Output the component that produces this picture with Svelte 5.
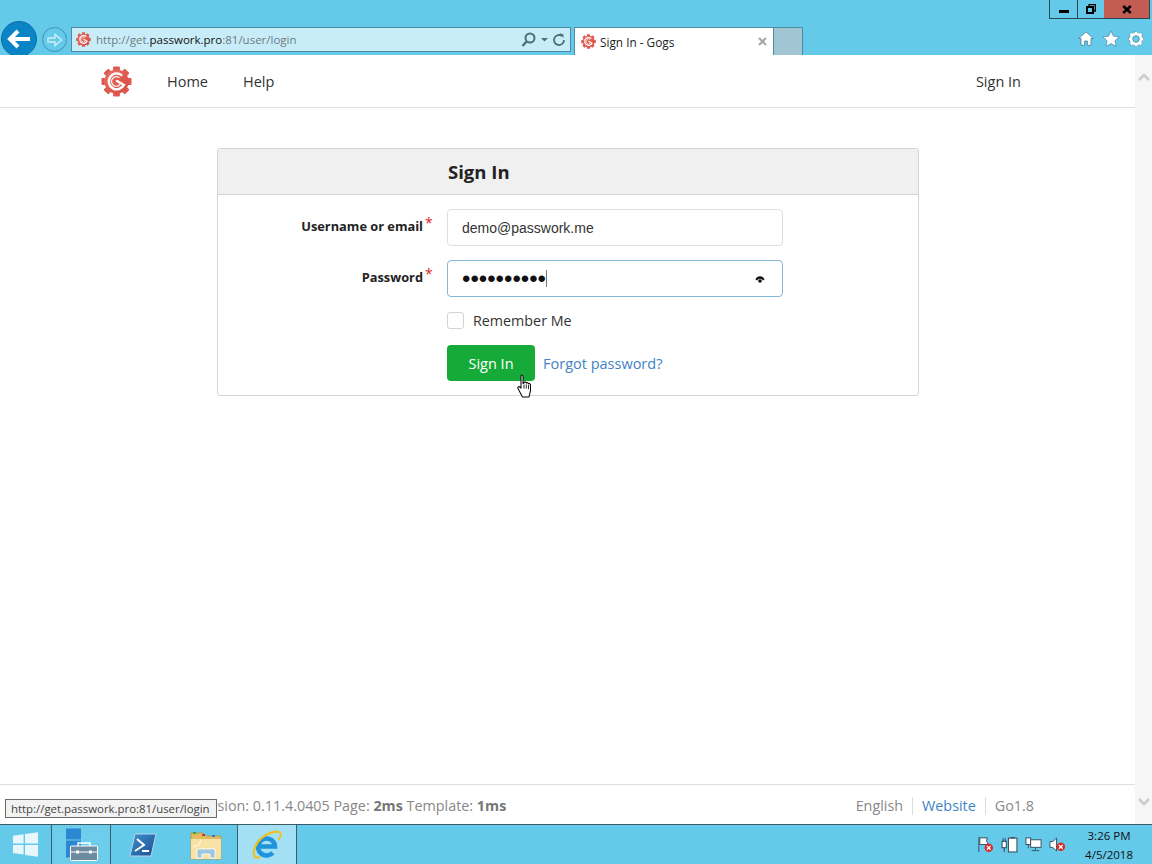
<script>
  const teeth = [0, 45, 90, 135, 180, 225, 270, 315];
  const taskItems = ['start', 'server', 'ps', 'folder', 'ie'];
</script>

{#snippet gear(size)}
  <svg class="gear" width={size} height={size} viewBox="0 0 32 32">
    <defs>
      <linearGradient id="gearFill" x1="0" y1="0" x2="1" y2="1">
        <stop offset="0" stop-color="#e8736a" />
        <stop offset="1" stop-color="#d9473d" />
      </linearGradient>
    </defs>
    {#each teeth as t}
      <rect x="12.5" y="0.5" width="7" height="8" rx="1" fill="#de5a50" transform="rotate({t} 16 16)" />
    {/each}
    <circle cx="16" cy="16" r="12.5" fill="url(#gearFill)" />
    <path d="M21 9.2 A8.2 8.2 0 1 0 23.6 19.5 L16.5 15.5" fill="none" stroke="#fff" stroke-width="2.6" stroke-linecap="round" />
    <path d="M19 12 A5 5 0 1 0 19.8 19" fill="none" stroke="#fff" stroke-width="1.2" />
  </svg>
{/snippet}

<div class="screen">
  <header class="chrome">
    <div class="winrow">
      <div class="winbtns">
        <div class="wb min"><span></span></div>
        <div class="wb restore">
          <svg width="10" height="10" viewBox="0 0 10 10"><path d="M3 2V0.700h6.300V7H8" fill="none" stroke="#000" stroke-width="1.300" /><rect x="1" y="3" width="6" height="6" fill="none" stroke="#000" stroke-width="2" /></svg>
        </div>
        <div class="wb close">
          <svg width="10" height="9" viewBox="0 0 10 9"><path d="M1.200 1 L8.800 8 M8.800 1 L1.200 8" stroke="#000" stroke-width="2.400" /></svg>
        </div>
      </div>
    </div>
    <div class="toolrow">
      <div class="back">
        <svg width="26" height="22" viewBox="0 0 26 22"><path d="M24 11H5M12 3l-8 8 8 8" fill="none" stroke="#fff" stroke-width="4" /></svg>
      </div>
      <div class="forward">
        <svg width="16" height="14" viewBox="0 0 16 14"><path d="M1 5h7V1.500L14.500 7 8 12.500V9H1z" fill="none" stroke="#d2eef8" stroke-width="1.300" /></svg>
      </div>
      <div class="address">
        {@render gear(15)}
        <span class="url">http://get.<b>passwork.pro</b>:81/user/login</span>
        <svg class="addr-tools" width="46" height="18" viewBox="0 0 46 18">
          <circle cx="9" cy="7" r="4.500" fill="none" stroke="#4d6f7c" stroke-width="2" />
          <path d="M5.500 10.500L1.500 15" stroke="#4d6f7c" stroke-width="2.400" />
          <path d="M20 7h7l-3.500 3.500z" fill="#4d6f7c" />
          <path d="M43 9a5 5 0 1 1-2-4" fill="none" stroke="#4d6f7c" stroke-width="1.800" />
          <path d="M38.500 2l4 1.500v3.500z" fill="#4d6f7c" />
        </svg>
      </div>
      <div class="tab">
        {@render gear(15)}
        <span>Sign In - Gogs</span>
        <svg class="tab-x" width="9" height="9" viewBox="0 0 9 9"><path d="M1 1l7 7M8 1l-7 7" stroke="#a5a5a5" stroke-width="2" /></svg>
      </div>
      <div class="newtab"></div>
      <div class="tool-icons">
        <svg width="16" height="15" viewBox="0 0 16 15"><path d="M8 0.800L0.700 7.500h2.300V14.300h3.600v-4.300h2.800v4.300H13V7.500h2.300z" fill="#fff" stroke="#3f7f9c" stroke-width="0.800" /></svg>
        <svg width="18" height="17" viewBox="0 0 17 16"><path d="M8.500 0.800l2.300 5 5.400.6-4 3.700 1.100 5.300-4.800-2.700-4.800 2.700 1.100-5.300-4-3.700 5.400-.6z" fill="#fff" stroke="#3f7f9c" stroke-width="0.600" /></svg>
        <svg width="16" height="16" viewBox="0 0 16 16">
          {#each teeth as t}
            <rect x="6.300" y="0.300" width="3.400" height="4" fill="#fff" stroke="#3f7f9c" stroke-width="0.500" transform="rotate({t} 8 8)" />
          {/each}
          <circle cx="8" cy="8" r="4.800" fill="none" stroke="#fff" stroke-width="2.800" />
          <circle cx="8" cy="8" r="3.300" fill="none" stroke="#3f7f9c" stroke-width="0.600" />
        </svg>
      </div>
    </div>
  </header>

  <div class="viewport">
    <div class="page">
      <nav class="nav">
        {@render gear(31)}
        <a class="first" href="#home">Home</a>
        <a href="#help">Help</a>
        <a class="right" href="#signin">Sign In</a>
      </nav>

      <main class="content">
        <form class="card" onsubmit={(e) => e.preventDefault()}>
          <h3 class="card-head">Sign In</h3>
          <div class="card-body">
            <div class="field">
              <label for="user">Username or email<i>*</i></label>
              <input id="user" type="text" value="demo@passwork.me" />
            </div>
            <div class="field">
              <label for="pass">Password<i>*</i></label>
              <div class="pass-wrap">
                <input id="pass" type="password" value="passwork12" />
                <span class="caret"></span>
                <svg class="eye" width="10" height="8" viewBox="0 0 10 8"><path d="M0.500 3.500a4.800 4.800 0 0 1 9 0L8 4.500a3.400 3.400 0 0 0-6 0z" fill="#111" /><circle cx="5" cy="5" r="1.800" fill="#111" /></svg>
              </div>
            </div>
            <div class="field check">
              <span class="box"></span>
              <span>Remember Me</span>
            </div>
            <div class="field actions">
              <button type="submit">Sign In</button>
              <a href="#forgot">Forgot password?</a>
              <svg class="hand" width="16" height="24" viewBox="0 0 16 23" preserveAspectRatio="none">
                <path d="M4 1.500c1-1 2-.5 2 1V9l1-.3V8c1-.8 2-.5 2.200.6 1-.7 2-.3 2.200.8 1-.4 2 0 2.100 1.200V16l-1.500 6H5.500L1 14c-.8-1.600.8-2.500 2.300-1.300L4 13.500z" fill="#fff" stroke="#000" stroke-width="1" stroke-linejoin="round" />
                <path d="M7 10v4M9.300 10v4M11.500 10.500v4" stroke="#000" stroke-width="0.800" />
              </svg>
            </div>
          </div>
        </form>
      </main>

      <footer class="foot">
        <span class="foot-left">Version: 0.11.4.0405 Page: <b>2ms</b> Template: <b>1ms</b></span>
        <span class="foot-right">
          <span>English</span>
          <a href="#site">Website</a>
          <span>Go1.8</span>
        </span>
      </footer>
      <div class="status-tip">http://get.passwork.pro:81/user/login</div>
    </div>
    <aside class="scrollbar">
      <svg width="12" height="9" viewBox="0 0 12 9"><path d="M1 8l5-5 5 5" fill="none" stroke="#cdcdcd" stroke-width="2.500" /></svg>
      <svg width="12" height="9" viewBox="0 0 12 9"><path d="M1 1l5 5 5-5" fill="none" stroke="#cdcdcd" stroke-width="2.500" /></svg>
    </aside>
  </div>

  <footer class="taskbar">
    {#each taskItems as item}
      <div class="task {item}">
        {#if item === 'start'}
          <svg width="27" height="27" viewBox="0 0 28 28"><path d="M1 5l11-1.600V13H1zM13.500 3.200L27 1.200V13H13.500zM1 14.500h11v9.800L1 22.800zM13.500 14.500H27v12.300L13.500 25z" fill="#fff" opacity="0.850" /></svg>
        {:else if item === 'server'}
          <svg width="33" height="33" viewBox="0 0 33 33">
            <rect x="1" y="0.500" width="15" height="11" fill="#2b87d1" />
            <rect x="1" y="12.500" width="15" height="17" fill="#2b87d1" />
            <rect x="5.500" y="18" width="27" height="14.500" rx="1" fill="#6c8ba0" stroke="#fff" />
            <path d="M13 18v-3h12v3" fill="none" stroke="#fff" stroke-width="1.500" />
            <path d="M6 24h26" stroke="#fff" />
            <rect x="11" y="22.500" width="3" height="3" fill="#fff" />
            <rect x="24" y="22.500" width="3" height="3" fill="#fff" />
          </svg>
        {:else if item === 'ps'}
          <svg width="28" height="24" viewBox="0 0 28 24">
            <defs>
              <linearGradient id="psFill" x1="0" y1="0" x2="1" y2="1">
                <stop offset="0" stop-color="#3f8fce" />
                <stop offset="1" stop-color="#1c4f8f" />
              </linearGradient>
            </defs>
            <path d="M6 1h21l-5 22H1z" fill="url(#psFill)" stroke="#b5d6ec" />
            <path d="M8 6l7 6-9 6" fill="none" stroke="#fff" stroke-width="2" />
            <path d="M13 18h7" stroke="#fff" stroke-width="2" />
          </svg>
        {:else if item === 'folder'}
          <svg width="32" height="30" viewBox="0 0 32 30">
            <path d="M1 3h12l3 3h15v23H1z" fill="#e3bb5c" stroke="#b8963f" stroke-width="0.800" />
            <rect x="3" y="2" width="3" height="2" fill="#3aa53a" /><rect x="12" y="4" width="3" height="2" fill="#c33" /><rect x="22" y="5" width="3" height="2" fill="#2a7fd0" />
            <path d="M1 9h30v20H1z" fill="#f8e3a6" />
            <path d="M7 28V19h18v9h-5v-4h-8v4z" fill="#9cc7df" stroke="#fff" stroke-width="0.800" />
            <path d="M3 17l6-2 2-5" fill="none" stroke="#fff" stroke-width="0.800" />
          </svg>
        {:else}
          <svg width="30" height="30" viewBox="0 0 30 30">
            <path d="M8 16.500h15a8.500 8.500 0 1 0-2.300 6.300" fill="none" stroke="#1f93dc" stroke-width="4.500" />
            <path d="M27.500 2C20 0.500 8 6 3.500 16 0.500 23 1 29.500 8 27" fill="none" stroke="#f0c020" stroke-width="2.200" />
            <path d="M27.500 2C29.500 3.500 28.500 7 26.500 10" fill="none" stroke="#f0c020" stroke-width="1.800" />
          </svg>
        {/if}
      </div>
    {/each}
    <div class="tray">
      <svg width="17" height="17" viewBox="0 0 18 18"><path d="M2 1v16M3 2h8l-1 3 2 4H3z" fill="#fff" stroke="#34505e" /><circle cx="12.500" cy="12.500" r="4.500" fill="#d82c2c" /><path d="M10.500 10.500l4 4M14.500 10.500l-4 4" stroke="#fff" stroke-width="1.300" /></svg>
      <svg width="17" height="17" viewBox="0 0 16 16"><rect x="1" y="5" width="4" height="6" fill="#fff" stroke="#34505e" /><path d="M2 5V2M4 5V2M3 11v4" stroke="#34505e" /><rect x="7" y="2" width="8" height="13" fill="#fff" stroke="#34505e" /><rect x="9" y="1" width="4" height="1" fill="#34505e" /></svg>
      <svg width="17" height="17" viewBox="0 0 18 16"><rect x="1" y="1" width="5" height="7" fill="#fff" stroke="#34505e" /><path d="M3.500 8v4" stroke="#34505e" /><rect x="6" y="3" width="11" height="8" fill="#fff" stroke="#34505e" /><path d="M11 11v3M7 14.500h8" stroke="#34505e" /></svg>
      <svg width="17" height="17" viewBox="0 0 18 16"><path d="M1 5h3l4-4v14l-4-4H1z" fill="#fff" stroke="#34505e" /><circle cx="12.500" cy="10.500" r="4.500" fill="#d82c2c" /><path d="M10.500 8.500l4 4M14.500 8.500l-4 4" stroke="#fff" stroke-width="1.300" /></svg>
      <div class="clock">
        <span>3:26 PM</span>
        <span>4/5/2018</span>
      </div>
    </div>
  </footer>
</div>

<style>
  :global(body) {
    margin: 0;
    overflow: hidden;
  }
  .screen {
    width: 1152px;
    height: 864px;
    display: flex;
    flex-direction: column;
    font-family: "Open Sans", "Noto Sans", sans-serif;
    color: #333;
    overflow: hidden;
  }

  /* browser chrome */
  .chrome {
    height: 55px;
    flex: none;
    background: #65c9ea;
    display: flex;
    flex-direction: column;
    overflow: hidden;
  }
  .winrow {
    height: 20px;
    flex: none;
    display: flex;
    justify-content: flex-end;
    padding-right: 2px;
  }
  .winbtns {
    display: flex;
    height: 19px;
    border: 1px solid #2b4754;
    border-top: 0;
    box-sizing: border-box;
  }
  .wb {
    display: flex;
    align-items: center;
    justify-content: center;
    box-sizing: border-box;
  }
  .wb.min {
    width: 28px;
    border-right: 1px solid #2b4754;
  }
  .wb.min span {
    width: 10px;
    height: 3px;
    margin-top: 4px;
    background: #000;
  }
  .wb.restore {
    width: 26px;
  }
  .wb.close {
    width: 45px;
    background: #c35c52;
  }
  .toolrow {
    flex: 1;
    display: flex;
    align-items: flex-start;
    position: relative;
  }
  .back {
    width: 36px;
    height: 36px;
    margin: 1px 0 0 1px;
    border-radius: 50%;
    background: #0b84c6;
    border: 1px solid #0a6ea6;
    box-sizing: border-box;
    display: flex;
    align-items: center;
    justify-content: center;
    flex: none;
  }
  .forward {
    width: 25px;
    height: 25px;
    margin: 7px 0 0 5px;
    border-radius: 50%;
    border: 1px solid #3f93b2;
    box-sizing: border-box;
    display: flex;
    align-items: center;
    justify-content: center;
    flex: none;
  }
  .address {
    width: 500px;
    height: 25px;
    margin: 7px 0 0 4px;
    box-sizing: border-box;
    background: #c9edf8;
    border: 1px solid #4d8ba3;
    display: flex;
    align-items: center;
    padding-left: 4px;
    flex: none;
  }
  .url {
    margin-left: 5px;
    font-size: 11.500px;
    color: #6b7c84;
    white-space: nowrap;
    flex: 1;
  }
  .url b {
    font-weight: 400;
    color: #111;
  }
  .addr-tools {
    margin-right: 3px;
  }
  .tab {
    width: 200px;
    height: 28px;
    margin: 7px 0 0 3px;
    box-sizing: border-box;
    background: #fff;
    border: 1px solid #4d8ba3;
    border-bottom: 0;
    display: flex;
    align-items: center;
    padding-left: 6px;
    font-size: 11.800px;
    color: #222;
    flex: none;
  }
  .tab span {
    margin-left: 4px;
    flex: 1;
  }
  .tab-x {
    margin-right: 6px;
  }
  .newtab {
    width: 29px;
    height: 28px;
    margin-top: 7px;
    box-sizing: border-box;
    background: #a2c5d4;
    border: 1px solid #4d8ba3;
    border-width: 1px 1px 0 0;
    flex: none;
  }
  .tool-icons {
    margin-left: auto;
    margin-right: 8px;
    margin-top: 10px;
    display: flex;
    gap: 8px;
    align-items: center;
  }

  /* page area */
  .viewport {
    flex: 1;
    min-height: 0;
    display: flex;
    background: #fff;
  }
  .page {
    flex: 1;
    display: flex;
    flex-direction: column;
    position: relative;
    min-width: 0;
  }
  .scrollbar {
    width: 17px;
    flex: none;
    background: #f6f6f6;
    display: flex;
    flex-direction: column;
    justify-content: space-between;
    align-items: center;
    padding: 17px 0 17px;
    box-sizing: border-box;
  }
  .nav {
    height: 53px;
    flex: none;
    box-sizing: border-box;
    border-bottom: 1px solid #dedede;
    display: flex;
    align-items: center;
    padding: 0 114px 0 101px;
    font-size: 14.500px;
  }
  .nav a {
    color: #333;
    text-decoration: none;
    margin-left: 35px;
  }
  .nav a.first {
    margin-left: 35px;
  }
  .nav a.right {
    margin-left: auto;
  }

  .content {
    flex: 1;
    padding: 40px 0 0 217px;
  }
  .card {
    width: 702px;
    height: 248px;
    box-sizing: border-box;
    border: 1px solid #d4d4d5;
    border-radius: 3px;
  }
  .card-head {
    margin: 0;
    height: 46px;
    box-sizing: border-box;
    background: #f0f0f0;
    border-bottom: 1px solid #d4d4d5;
    padding-left: 230px;
    font-size: 18.500px;
    line-height: 46px;
    font-weight: 700;
    color: #222;
  }
  .card-body {
    padding: 14px 0 0 229px;
  }
  .field {
    display: flex;
    align-items: center;
    height: 37px;
    margin-bottom: 14px;
    position: relative;
  }
  .field label {
    position: absolute;
    right: 100%;
    top: 0;
    width: 200px;
    margin-right: 24px;
    text-align: right;
    font-size: 12.800px;
    font-weight: 700;
    line-height: 34px;
    color: #222;
    white-space: nowrap;
  }
  .field label i {
    position: absolute;
    left: 100%;
    top: -3px;
    margin-left: 2px;
    color: #db2828;
    font-style: normal;
    font-size: 14px;
    font-weight: 400;
  }
  .field input {
    width: 336px;
    height: 37px;
    box-sizing: border-box;
    padding: 0 14px;
    border: 1px solid #dedede;
    border-radius: 4px;
    font-family: "Liberation Sans", Arial, sans-serif;
    font-size: 14px;
    color: #333;
    background: #fff;
    outline: none;
  }
  .pass-wrap {
    position: relative;
    height: 37px;
  }
  .pass-wrap input {
    border-color: #85b7d9;
    font-size: 24px;
    color: #111;
  }
  .caret {
    position: absolute;
    left: 99px;
    top: 10px;
    width: 1px;
    height: 17px;
    background: #777;
  }
  .eye {
    position: absolute;
    right: 18px;
    top: 16px;
  }
  .field.check {
    height: 17px;
    margin: 15px 0 16px;
    font-size: 14.300px;
    color: #333;
  }
  .box {
    width: 17px;
    height: 17px;
    box-sizing: border-box;
    border: 1px solid #d4d4d5;
    border-radius: 3px;
    margin-right: 9px;
  }
  .actions {
    height: 36px;
    margin: 0;
  }
  .actions button {
    width: 88px;
    height: 36px;
    border: 0;
    border-radius: 4px;
    background: #16ab39;
    color: #fff;
    font-family: inherit;
    font-size: 14.500px;
    padding: 0;
  }
  .actions a {
    margin-left: 8px;
    color: #4183c4;
    font-size: 14.500px;
    text-decoration: none;
  }
  .hand {
    position: absolute;
    left: 70px;
    top: 29px;
  }

  .foot {
    height: 40px;
    flex: none;
    box-sizing: border-box;
    border-top: 1px solid #dedede;
    display: flex;
    align-items: center;
    justify-content: space-between;
    padding: 2px 101px 0 195px;
    font-size: 14.350px;
    color: #888;
  }
  .foot-left b {
    color: #777;
  }
  .foot-right {
    display: flex;
    align-items: center;
  }
  .foot-right > * {
    padding: 0 9px;
    border-left: 1px solid #ddd;
    line-height: 18px;
  }
  .foot-right > :first-child {
    border-left: 0;
  }
  .foot-right > :last-child {
    padding-right: 0;
  }
  .foot-right a {
    color: #4183c4;
    text-decoration: none;
  }
  .status-tip {
    position: absolute;
    left: 5px;
    bottom: 6px;
    width: 212px;
    height: 19px;
    padding: 0 5px;
    box-sizing: border-box;
    background: #f2f2f2;
    border: 1px solid #6d6d6d;
    font-size: 11.400px;
    line-height: 17px;
    color: #444;
    white-space: nowrap;
  }

  /* taskbar */
  .taskbar {
    height: 40px;
    flex: none;
    box-sizing: border-box;
    background: #65c9ea;
    border-top: 1px solid #3a5a68;
    display: flex;
  }
  .task {
    box-sizing: border-box;
    display: flex;
    align-items: center;
    justify-content: center;
    border-right: 1px solid #34606f;
    background: #6fcdec;
  }
  .task.start { width: 52px; background: #65c9ea; }
  .task.server { width: 59px; }
  .task.ps { width: 64px; background: #65c9ea; border-right: 0; }
  .task.folder { width: 63px; background: #65c9ea; }
  .task.ie { width: 59px; background: #a4e0f4; }
  .tray {
    margin-left: auto;
    display: flex;
    align-items: center;
    gap: 7px;
    padding-right: 19px;
  }
  .clock {
    display: flex;
    flex-direction: column;
    align-items: center;
    font-size: 11.500px;
    line-height: 19px;
    color: #111;
    margin-left: 12px;
  }
</style>
